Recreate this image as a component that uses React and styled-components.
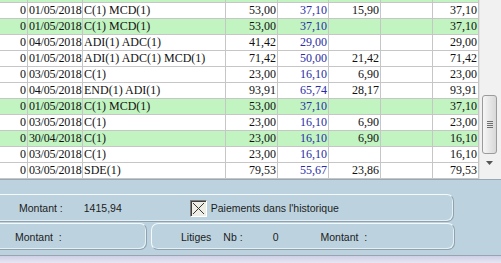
import React from "react";
import styled, { createGlobalStyle } from "styled-components";

const Global = createGlobalStyle`
  html, body { margin: 0; padding: 0; }
  body { width: 501px; height: 263px; overflow: hidden; background: #bcd3df; }
`;

const Screen = styled.div`
  width: 501px;
  height: 263px;
  display: flex;
  flex-direction: column;
  overflow: hidden;
`;

const GridArea = styled.div`
  height: 181px;
  display: flex;
  background: #fff;
  border-bottom: 1px solid #9aa7ae;
  box-sizing: border-box;
`;

const Table = styled.div`
  width: 478px;
  display: flex;
  flex-direction: column;
  overflow: hidden;
  border-right: 1px solid #c6c6c6;
`;

const Row = styled.div`
  display: grid;
  grid-template-columns: 28px 55px 143px 52px 51px 52px 52px 45px;
  height: ${(p) => (p.$partial ? "3px" : "16px")};
  flex: none;
  overflow: hidden;
  background: ${(p) => (p.$green ? "#c1f4c1" : "#fff")};
`;

const Cell = styled.div`
  box-sizing: border-box;
  border-right: 1px solid #c6c6c6;
  border-bottom: 1px solid #c6c6c6;
  font-family: "Liberation Serif", "Times New Roman", serif;
  font-size: 12px;
  line-height: 15px;
  letter-spacing: ${(p) => (p.$tight ? "-0.2px" : "0")};
  white-space: nowrap;
  overflow: hidden;
  padding: 0 ${(p) => (p.$right ? "1px" : "0")} 0 ${(p) => (p.$right ? "0" : "1px")};
  text-align: ${(p) => (p.$right ? "right" : "left")};
  color: ${(p) => (p.$blue ? "#2b2ba6" : "#111")};
  &:last-child { border-right: none; }
`;

const ScrollBar = styled.div`
  flex: 1;
  background: #f1f1f1;
  display: flex;
  flex-direction: column;
  align-items: flex-start;
  padding-left: 2px;
  border-left: 1px solid #e2e2e2;
`;

const Thumb = styled.div`
  margin-top: 95px;
  width: 15px;
  height: 59px;
  box-sizing: border-box;
  border: 1px solid #9b9b9b;
  border-radius: 3px;
  background: linear-gradient(to right, #f6f6f6, #e4e4e4 60%, #d8d8d8);
  display: flex;
  flex-direction: column;
  align-items: center;
  justify-content: center;
  gap: 1px;
`;

const Grip = styled.span`
  width: 6px;
  height: 1px;
  background: #6f6f6f;
`;

const Arrow = styled.div`
  margin-top: 4px;
  width: 15px;
  height: 10px;
  display: flex;
  align-items: center;
  justify-content: center;
`;

const Panel = styled.div`
  flex: 1;
  background: #bcd3df;
  display: flex;
  flex-direction: column;
  padding-top: 14px;
  gap: 1px;
`;

const Group = styled.div`
  box-sizing: border-box;
  height: ${(p) => p.$h}px;
  width: ${(p) => p.$w}px;
  margin-left: ${(p) => p.$ml || 0}px;
  border-top: 1px solid #f4f9fb;
  border-right: 1px solid #8ea3af;
  border-bottom: 1px solid #8ea3af;
  border-left: ${(p) => (p.$open ? "none" : "1px solid #f4f9fb")};
  border-radius: ${(p) => (p.$open ? "0 7px 7px 0" : "7px")};
  box-shadow: inset -1px -1px 0 #e6eff4;
  display: flex;
  align-items: center;
  font-family: "Liberation Sans", Arial, sans-serif;
  font-size: 10.5px;
  color: #1c1c1c;
`;

const GroupRow = styled.div`
  display: flex;
  gap: 3px;
`;

const Label = styled.span`
  margin-left: ${(p) => p.$ml || 0}px;
  white-space: nowrap;
`;

const CheckBox = styled.span`
  width: 17px;
  height: 17px;
  box-sizing: border-box;
  border-top: 1px solid #7d7d7d;
  border-left: 1px solid #7d7d7d;
  border-bottom: 1px solid #ffffff;
  border-right: 1px solid #ffffff;
  background: #efeee6;
  box-shadow: inset 1px 1px 0 #3f3f3f;
  display: inline-flex;
  align-items: center;
  justify-content: center;
  margin-left: ${(p) => p.$ml || 0}px;
  margin-right: 4px;
`;

const Footer = styled.div`
  height: 8px;
  border-top: 1px solid #9aa3b0;
  background: linear-gradient(to bottom, #cfd0e6, #e9e9f5);
  margin-top: 4px;
`;

const rows = [
  { green: true, partial: true, c: ["0", "01/05/2018", "C(1) MCD(1)", "53,00", "37,10", "", "", "37,10"] },
  { c: ["0", "01/05/2018", "C(1) MCD(1)", "53,00", "37,10", "15,90", "", "37,10"] },
  { green: true, c: ["0", "01/05/2018", "C(1) MCD(1)", "53,00", "37,10", "", "", "37,10"] },
  { c: ["0", "04/05/2018", "ADI(1) ADC(1)", "41,42", "29,00", "", "", "29,00"] },
  { c: ["0", "01/05/2018", "ADI(1) ADC(1) MCD(1)", "71,42", "50,00", "21,42", "", "71,42"] },
  { c: ["0", "03/05/2018", "C(1)", "23,00", "16,10", "6,90", "", "23,00"] },
  { c: ["0", "04/05/2018", "END(1) ADI(1)", "93,91", "65,74", "28,17", "", "93,91"] },
  { green: true, c: ["0", "01/05/2018", "C(1) MCD(1)", "53,00", "37,10", "", "", "37,10"] },
  { c: ["0", "03/05/2018", "C(1)", "23,00", "16,10", "6,90", "", "23,00"] },
  { green: true, c: ["0", "30/04/2018", "C(1)", "23,00", "16,10", "6,90", "", "16,10"] },
  { c: ["0", "03/05/2018", "C(1)", "23,00", "16,10", "", "", "16,10"] },
  { c: ["0", "03/05/2018", "SDE(1)", "79,53", "55,67", "23,86", "", "79,53"] },
];

const rightCols = [true, false, false, true, true, true, true, true];

export default function App() {
  return (
    <Screen>
      <Global />
      <GridArea>
        <Table>
          {rows.map((r, i) => (
            <Row key={i} $green={r.green} $partial={r.partial}>
              {r.partial
                ? r.c.map((_, j) => <Cell key={j} />)
                : r.c.map((v, j) => (
                    <Cell key={j} $right={rightCols[j]} $blue={j === 4} $tight={j === 1}>
                      {v}
                    </Cell>
                  ))}
            </Row>
          ))}
        </Table>
        <ScrollBar>
          <Thumb>
            <Grip />
            <Grip />
            <Grip />
            <Grip />
          </Thumb>
          <Arrow>
            <svg width="7" height="4" viewBox="0 0 7 4">
              <path d="M0 0 H7 L3.5 4 Z" fill="#555" />
            </svg>
          </Arrow>
        </ScrollBar>
      </GridArea>
      <Panel>
        <Group $h={28} $w={454} $open>
          <Label $ml={19}>Montant :</Label>
          <Label $ml={21}>1415,94</Label>
          <CheckBox $ml={68}>
            <svg width="13" height="13" viewBox="0 0 13 13">
              <path d="M1 1 L12 12 M12 1 L1 12" stroke="#3a3a3a" strokeWidth="1" />
            </svg>
          </CheckBox>
          <Label>Paiements dans l'historique</Label>
        </Group>
        <GroupRow>
          <Group $h={27} $w={147} $open>
            <Label $ml={15}>Montant&nbsp; :</Label>
          </Group>
          <Group $h={27} $w={304} $ml={1}>
            <Label $ml={29}>Litiges</Label>
            <Label $ml={12}>Nb :</Label>
            <Label $ml={30}>0</Label>
            <Label $ml={42}>Montant&nbsp; :</Label>
          </Group>
        </GroupRow>
        <Footer />
      </Panel>
    </Screen>
  );
}
